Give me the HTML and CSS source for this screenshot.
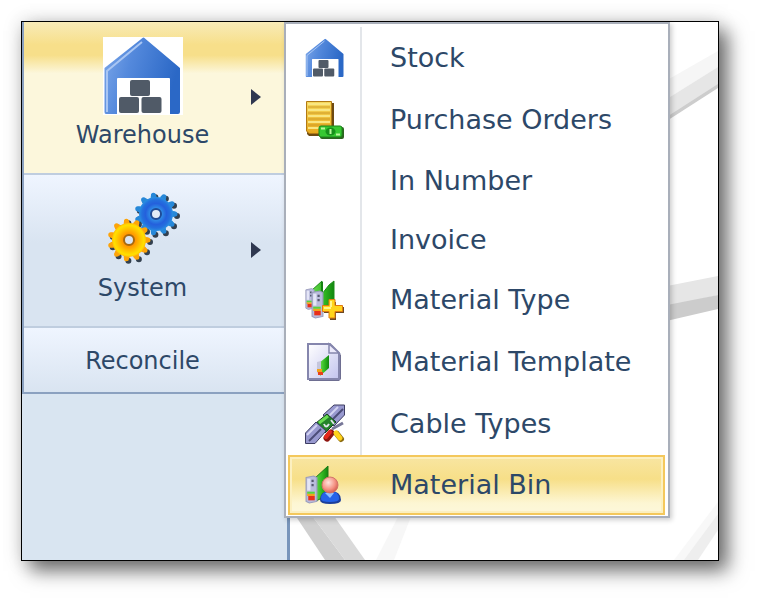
FILE: index.html
```html
<!DOCTYPE html>
<html lang="en">
<head>
  <meta charset="UTF-8" />
  <title>Warehouse menu</title>
  <link rel="stylesheet" href="styles.css">
</head>
<body>
  <!-- shared shapes -->
  <svg class="defs" aria-hidden="true">
    <defs>
      <linearGradient id="roof" x1="0" y1="0" x2="1" y2="0.3">
        <stop offset="0" stop-color="#7fa9ea" />
        <stop offset="0.4" stop-color="#5489dc" />
        <stop offset="1" stop-color="#2b68c6" />
      </linearGradient>
      <radialGradient id="blueGear" r="0.8">
        <stop offset="0.35" stop-color="#2f8ae6" />
        <stop offset="0.6" stop-color="#2460dc" />
        <stop offset="0.8" stop-color="#2470de" />
        <stop offset="1" stop-color="#2b96e2" />
      </radialGradient>
      <radialGradient id="goldGear" r="0.8">
        <stop offset="0.35" stop-color="#ff9500" />
        <stop offset="0.65" stop-color="#ffc400" />
        <stop offset="0.85" stop-color="#ffe000" />
        <stop offset="1" stop-color="#ffb508" />
      </radialGradient>
      <linearGradient id="sheet" x1="0" y1="0" x2="1" y2="1">
        <stop offset="0" stop-color="#ffffff" />
        <stop offset="1" stop-color="#c3c4ee" />
      </linearGradient>
      <linearGradient id="green" x1="0" y1="0" x2="1" y2="0">
        <stop offset="0" stop-color="#6fe052" />
        <stop offset="0.6" stop-color="#2fb51f" />
        <stop offset="1" stop-color="#12870f" />
      </linearGradient>
      <linearGradient id="gold" x1="0" y1="0" x2="0" y2="1">
        <stop offset="0" stop-color="#f6d95e" />
        <stop offset="1" stop-color="#e8a91c" />
      </linearGradient>
      <radialGradient id="face" cx="0.4" cy="0.35" r="0.7">
        <stop offset="0" stop-color="#ffe3dc" />
        <stop offset="0.6" stop-color="#f59384" />
        <stop offset="1" stop-color="#cf5547" />
      </radialGradient>
    </defs>
    <symbol id="warehouse" viewBox="0 0 80 78">
      <path fill="url(#roof)" d="M39.500 1 Q40.500 0 42 1.500 L77 31 V75 Q77 77 75 77 H67 V42 Q67 41 66 41 H15 Q14 41 14 42 V77 H3 Q1.500 77 1.500 75 V31 Z" />
      <path fill="none" stroke="#a9c6f3" stroke-width="2" d="M4 75 V34 L39 5" />
      <g fill="#505a67">
        <rect x="27" y="43" width="20" height="16" rx="2" />
        <rect x="16" y="60" width="20" height="16" rx="2" />
        <rect x="38.500" y="60" width="20" height="16" rx="2" />
      </g>
    </symbol>
    <symbol id="module" viewBox="0 0 12 26">
      <path fill="#b9bbdc" stroke="#9a9cbc" d="M1 2 L8 .5 L11 2 V24 L4 25.500 L1 24 Z" />
      <path fill="#e4e5f6" d="M2 3 H5 V14 H2 Z" />
      <path fill="#555870" d="M6 4 H8 V6 H6 Z M6 8 H8 V10 H6 Z" />
      <path fill="#58d43a" d="M2 15 H9 V17 H2 Z" />
      <path fill="#f2a21c" d="M2 17 H9 V19 H2 Z" />
      <path fill="#e8301b" d="M3 19 H9 V23 H3 Z" />
    </symbol>
  </svg>

  <div class="window">
    <svg class="backdrop" viewBox="0 0 696 538" preserveAspectRatio="xMidYMid slice" aria-hidden="true">
      <path fill="#f6f6f6" d="M640 61 L696 29 V45 L640 80 Z" />
      <path fill="#e6e6e6" d="M640 80 L696 45 V63 L640 99 Z" />
      <path fill="#cdcdcd" d="M640 98 L696 62 V66 L640 102 Z" />
      <path fill="#e6e6e6" d="M640 265 L696 254 V273 L640 286 Z" />
      <path fill="#cccccc" d="M640 284 L696 273 V287 L640 300 Z" />
      <path fill="#f8f8f8" d="M652 538 L696 480 V494 L664 538 Z" />
      <path fill="#eeeeee" d="M662 538 L696 492 V508 L676 538 Z" />
      <path fill="#d0d0d0" d="M269 487 L303 538 H323 L285 487 Z" />
      <path fill="#dadada" d="M285 487 L323 538 H343 L307 487 Z" />
      <path fill="#f7f7f7" d="M380 487 L354 538 H372 L392 487 Z" />
    </svg>

    <nav class="sidebar">
      <ul class="main-menu">
        <li class="main-item active">
          <button class="main-button" aria-expanded="true">
            <span class="main-content">
              <svg class="main-icon boxed" viewBox="0 0 80 78"><use href="#warehouse" /></svg>
              <span>Warehouse</span>
            </span>
            <svg class="arrow" viewBox="0 0 10 16"><path fill="#2f3850" d="M0 0 L10 8 L0 16 Z" /></svg>
          </button>

          <ul class="submenu">
            <li><a class="sub-link" href="#">
              <span class="sub-icon"><svg viewBox="0 0 80 78"><use href="#warehouse" /></svg></span>
              <span>Stock</span>
            </a></li>
            <li><a class="sub-link" href="#">
              <span class="sub-icon"><svg viewBox="0 0 40 40">
                <path fill="#6d4a12" d="M3 3 H29 V34 L26 36 H4 L2 34 Z" />
                <path fill="url(#gold)" stroke="#b27a14" d="M1.500 1.500 H26.500 V31 L24 33.500 H4 L1.500 31 Z" />
                <path stroke="#f9e682" stroke-width="2" d="M3 4 H25 M3 10 H25 M3 16 H25 M3 22 H25 M3 28 H20" />
                <path stroke="#cf9a26" d="M3 7 H25 M3 13 H25 M3 19 H25 M3 25 H25" />
                <rect x="15" y="27" width="24" height="12" rx="2" fill="#2c6420" />
                <rect x="14" y="26" width="23" height="11" rx="2" fill="#36c832" stroke="#1b861a" />
                <ellipse cx="25.500" cy="31.500" rx="5" ry="4" fill="#17901c" />
                <path stroke="#b9f79c" stroke-width="2" d="M16 28.500 H20 M31 34.500 H35 M25.500 29 V34" />
              </svg></span>
              <span>Purchase Orders</span>
            </a></li>
            <li><a class="sub-link plain" href="#">
              <span class="sub-icon"></span>
              <span>In Number</span>
            </a></li>
            <li><a class="sub-link plain" href="#">
              <span class="sub-icon"></span>
              <span>Invoice</span>
            </a></li>
            <li><a class="sub-link" href="#">
              <span class="sub-icon"><svg viewBox="0 0 40 40">
                <path fill="url(#green)" stroke="#1c8a18" d="M6 11 L17 1 V14 L24 5 L29 1 V27 L14 32 L6 22 Z" />
                <path fill="#168213" d="M16 2 H18 V14 L16 16 Z" />
                <use href="#module" x="0" y="8" width="10" height="22" />
                <use href="#module" x="6" y="10" width="13" height="29" />
                <path fill="#6b4a24" d="M25 22 H31 V27 H39 V33 H31 V40 H25 V33 H19 V27 H25 Z" />
                <path fill="#ffd51c" stroke="#e07a10" stroke-linejoin="round" d="M24 19.500 H30 V25.500 H37.500 V31.500 H30 V38 H24 V31.500 H17.500 V25.500 H24 Z" />
                <path fill="#fff58a" d="M25 21 H27 V27 H25 Z M19 27 H26 V29 H19 Z" />
              </svg></span>
              <span>Material Type</span>
            </a></li>
            <li><a class="sub-link" href="#">
              <span class="sub-icon"><svg viewBox="0 0 40 40">
                <path fill="#6e6e91" d="M5 3 H27 L36 13 V37 L34 39 H4 Z" />
                <path fill="url(#sheet)" stroke="#8586ad" stroke-width="2" d="M3 2 H25 L34 11 V37 H3 Z" />
                <path fill="#eceafb" stroke="#8586ad" stroke-width="1.500" d="M24 2 V11 H34 Z" />
                <path fill="url(#green)" d="M14 21 L24 13 V26 L15 34 Z" />
                <path fill="#c5c6dd" d="M12 20 L16 19 V32 L12 31 Z" />
                <path fill="#f2a21c" d="M12 27 H17 V30 H12 Z" />
                <path fill="#e8401b" d="M13 30 H18 V33 H13 Z" />
              </svg></span>
              <span>Material Template</span>
            </a></li>
            <li><a class="sub-link" href="#">
              <span class="sub-icon"><svg viewBox="0 0 40 40">
                <path fill="#9899cf" stroke="#3e3e63" d="M18 11 L29 1 H39.500 V11 L29 22 Z" />
                <path stroke="#d4d4f2" stroke-width="2" d="M24 12 L33 3" />
                <path stroke="#4c4d79" stroke-width="2" d="M28 15 L38 5" />
                <path fill="#23822a" stroke="#183d20" d="M11 19 L22 10 L31 18 L20 29 Z" />
                <path stroke="#6bdc54" stroke-width="3" fill="none" d="M14 19 L23 12" />
                <path stroke="#dfe3ea" stroke-width="2" fill="none" d="M19 20 Q21 25 24 20 M26 16 L29 20" />
                <path fill="#9899cf" stroke="#3e3e63" d="M.5 29 L11 18 L21 27 L10 39.500 H.5 Z" />
                <path stroke="#d4d4f2" stroke-width="2" d="M2 31 L12 21" />
                <path stroke="#4c4d79" stroke-width="2" d="M4 37 L16 25" />
                <path stroke="#777798" stroke-width="3" d="M27 25 L38 19" />
                <path stroke="#8e1510" stroke-width="7" stroke-linecap="round" d="M22 34 L26 29" />
                <path stroke="#e3281c" stroke-width="4" stroke-linecap="round" d="M21 33 L25 28" />
                <path stroke="#8b6a10" stroke-width="6" stroke-linecap="round" d="M32 30 L36 35" />
                <path stroke="#ffd21a" stroke-width="5" stroke-linecap="round" d="M31 29 L35 34" />
              </svg></span>
              <span>Cable Types</span>
            </a></li>
            <li><a class="sub-link selected" href="#">
              <span class="sub-icon"><svg viewBox="0 0 40 40">
                <path fill="url(#green)" stroke="#1c7a16" d="M9 14 L23 1 V30 L11 36 Z" />
                <use href="#module" x="0" y="10" width="13" height="29" />
                <path fill="#1c3f9b" d="M15 35 Q15 26 25 26 Q36 26 36 35 Q36 39 25 39 Q15 39 15 35 Z" />
                <path fill="#2563e8" d="M16 34 Q16 26 25 26 Q34 26 34 34 Q34 37 25 37 Q16 37 16 34 Z" />
                <path fill="#8fc0ff" d="M20 28 L25 33 L29 28 Z" />
                <circle cx="25" cy="20" r="8" fill="url(#face)" stroke="#d0766a" />
              </svg></span>
              <span>Material Bin</span>
            </a></li>
          </ul>
        </li>

        <li class="main-item">
          <button class="main-button">
            <span class="main-content">
              <svg class="main-icon" viewBox="0 0 80 78">
                <g class="gear" stroke="#33404f" fill="none">
                  <circle cx="55" cy="26" r="19" stroke-width="6" pathLength="11" />
                  <circle cx="28" cy="52" r="19" stroke-width="6" pathLength="11" />
                </g>
                <g class="gear" stroke="#2788d8" fill="none">
                  <circle cx="53" cy="24" r="19" stroke-width="5" pathLength="11" />
                  <circle cx="53" cy="24" r="17" stroke-width="6" pathLength="11" />
                </g>
                <circle cx="53" cy="24" r="11" fill="none" stroke="url(#blueGear)" stroke-width="12" />
                <circle cx="53" cy="24" r="5" fill="none" stroke="#204b96" stroke-width="2" />
                <g class="gear" stroke="#fda40a" fill="none">
                  <circle cx="26" cy="50" r="19" stroke-width="5" pathLength="11" />
                  <circle cx="26" cy="50" r="17" stroke-width="6" pathLength="11" />
                </g>
                <circle cx="26" cy="50" r="11" fill="none" stroke="url(#goldGear)" stroke-width="12" />
                <circle cx="26" cy="50" r="5" fill="none" stroke="#a56a10" stroke-width="2" />
              </svg>
              <span>System</span>
            </span>
            <svg class="arrow" viewBox="0 0 10 16"><path fill="#2f3850" d="M0 0 L10 8 L0 16 Z" /></svg>
          </button>
        </li>

        <li class="main-item">
          <button class="main-button">
            <span class="main-content">Reconcile</span>
          </button>
        </li>
      </ul>
    </nav>
  </div>
</body>
</html>
```
FILE: styles.css
```css
* {
  box-sizing: border-box;
}

body {
  margin: 0;
  min-height: 100vh;
  padding: 21px 42px 42px 21px;
  display: flex;
  background: #fff;
  font-family: Verdana, "DejaVu Sans", sans-serif;
  color: #2d4868;
}

ul {
  list-style: none;
  margin: 0;
  padding: 0;
}

.defs {
  position: absolute;
  width: 0;
  height: 0;
}

.window {
  position: relative;
  flex: 1;
  display: flex;
  border: 1px solid #000;
  background: #fff;
  box-shadow: 9px 10px 18px rgba(0, 0, 0, 0.55), 0 0 18px rgba(0, 0, 0, 0.15);
}

.backdrop {
  position: absolute;
  inset: 0;
  width: 100%;
  height: 100%;
}

/* left column */
.sidebar {
  position: relative;
  width: 268px;
  background: #d9e5f1;
  border-right: 3px solid #7895bb;
}

.main-menu {
  border-left: 2px solid #8ba1c0;
  border-bottom: 2px solid #8ba1c0;
}

.main-item {
  position: relative;
}

.main-item + .main-item {
  border-top: 2px solid #bfcddf;
}

.main-button {
  display: flex;
  align-items: center;
  width: 100%;
  margin: 0;
  padding: 15px 26px 13px 10px;
  border: none;
  background: linear-gradient(#eff5ff, #d9e4f1 45%);
  font: inherit;
  font-size: 24px;
  line-height: 36px;
  color: inherit;
  cursor: pointer;
}

.main-item:last-child .main-button {
  padding-right: 36px;
  background: linear-gradient(#eff5ff, #d9e4f1);
}

.active .main-button {
  background: linear-gradient(#f8ebb8, #f7df8a 15%, #f7df8a 22%, #fcf7dc 34%);
}

.main-button:has(.main-icon) {
  padding-bottom: 20px;
}

.main-content {
  flex: 1;
  display: flex;
  flex-direction: column;
  align-items: center;
}

.main-icon {
  width: 80px;
  height: 78px;
  margin-bottom: 2px;
}

.main-icon.boxed {
  background: #fff;
}

.arrow {
  width: 10px;
  height: 16px;
  margin-top: 4px;
}

.gear {
  stroke-dasharray: 0 1;
  stroke-linecap: round;
}

/* fly-out menu */
.submenu {
  position: absolute;
  z-index: 2;
  top: 0;
  left: 260px;
  padding: 3px 3px 1px 2px;
  border: 2px solid #a9afba;
  background: #fff;
  box-shadow: 2px 2px 5px rgba(0, 0, 0, 0.2);
}

.sub-link {
  display: flex;
  align-items: center;
  gap: 28px;
  height: 62px;
  padding-right: 34px;
  font-size: 27px;
  line-height: 36px;
  white-space: nowrap;
  color: inherit;
  text-decoration: none;
}

.sub-link.plain {
  height: 59px;
}

.sub-icon {
  display: flex;
  align-items: center;
  justify-content: center;
  width: 74px;
  height: 100%;
  padding-left: 2px;
  border-right: 2px solid #e3e6ea;
}

.sub-icon svg {
  width: 40px;
  height: 40px;
}

.sub-link.selected {
  height: 60px;
  background: linear-gradient(#f8e6a4, #f7df88 40%, #fdf6d3 80%, #fdf8dc);
  box-shadow: inset 0 0 0 2px #f4c85c, inset 0 0 0 4px #fcf0c0;
}

.selected .sub-icon {
  border-color: transparent;
}
```
